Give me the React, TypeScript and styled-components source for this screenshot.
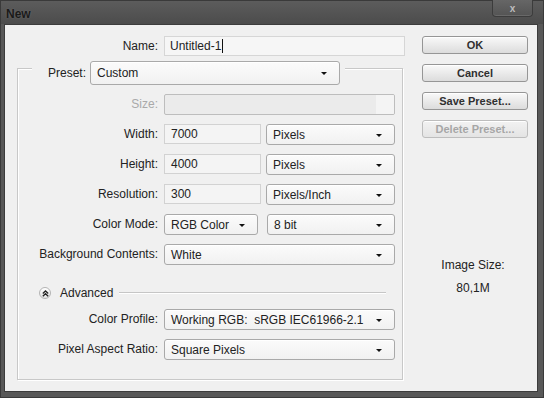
import React from "react";
import styled, { createGlobalStyle } from "styled-components";

const GlobalStyle = createGlobalStyle`
  html, body {
    margin: 0;
    padding: 0;
    background: #4e4e4e;
  }
  * {
    box-sizing: border-box;
  }
`;

const Dialog: React.FC = () => {
  return (
    <Window>
      <TitleBar>
        <Title>New</Title>
        <CloseButton>x</CloseButton>
      </TitleBar>
      <Client>
        <MainColumn>
          <NameRow>
            <Label>Name:</Label>
            <NameInput>
              Untitled-1<Caret />
            </NameInput>
          </NameRow>

          <GroupBox>
            <PresetRow>
              <Label>Preset:</Label>
              <Select width={250}>Custom</Select>
            </PresetRow>

            <Rows first>
              <FieldRow>
                <Label disabled>Size:</Label>
                <SizeInput>
                  <SizeStepper />
                </SizeInput>
              </FieldRow>
              <FieldRow>
                <Label>Width:</Label>
                <Pair left={97} gap={5}>
                  <TextInput>7000</TextInput>
                  <Select>Pixels</Select>
                </Pair>
              </FieldRow>
              <FieldRow>
                <Label>Height:</Label>
                <Pair left={97} gap={5}>
                  <TextInput>4000</TextInput>
                  <Select>Pixels</Select>
                </Pair>
              </FieldRow>
              <FieldRow>
                <Label>Resolution:</Label>
                <Pair left={97} gap={5}>
                  <TextInput>300</TextInput>
                  <Select>Pixels/Inch</Select>
                </Pair>
              </FieldRow>
              <FieldRow>
                <Label>Color Mode:</Label>
                <Pair left={94} gap={9}>
                  <Select>RGB Color</Select>
                  <Select>8 bit</Select>
                </Pair>
              </FieldRow>
              <FieldRow>
                <Label>Background Contents:</Label>
                <Select>White</Select>
              </FieldRow>
            </Rows>

            <AdvancedRow>
              <AdvancedIcon>
                <svg width="7" height="7" viewBox="0 0 7 7">
                  <path
                    d="M0.8 3.4 L3.5 0.9 L6.2 3.4 M0.8 6.2 L3.5 3.7 L6.2 6.2"
                    fill="none"
                    stroke="#222"
                    strokeWidth="1.3"
                  />
                </svg>
              </AdvancedIcon>
              <AdvancedText>Advanced</AdvancedText>
              <Rule />
            </AdvancedRow>

            <Rows>
              <FieldRow>
                <Label>Color Profile:</Label>
                <Select>Working RGB:&nbsp; sRGB IEC61966-2.1</Select>
              </FieldRow>
              <FieldRow>
                <Label>Pixel Aspect Ratio:</Label>
                <Select>Square Pixels</Select>
              </FieldRow>
            </Rows>
          </GroupBox>
        </MainColumn>

        <SideColumn>
          <Button>OK</Button>
          <Button>Cancel</Button>
          <Button>Save Preset...</Button>
          <Button disabled>Delete Preset...</Button>
          <ImageSize>
            <span>Image Size:</span>
            <span>80,1M</span>
          </ImageSize>
        </SideColumn>
      </Client>
    </Window>
  );
};

export default function App() {
  return (
    <>
      <GlobalStyle />
      <Dialog />
    </>
  );
}

const Window = styled.div`
  width: 544px;
  height: 398px;
  display: flex;
  flex-direction: column;
  background: #585858;
  border: 1px solid #3a3a3a;
  font-family: "Liberation Sans", Arial, sans-serif;
  font-size: 12px;
  color: #222;
`;

const TitleBar = styled.div`
  height: 25px;
  display: flex;
  align-items: flex-start;
  justify-content: space-between;
  background: linear-gradient(#5c5c5c, #4c4c4c);
`;

const Title = styled.div`
  margin: 6px 0 0 5px;
  font-weight: bold;
  font-size: 12px;
  color: #1a1a1a;
  text-shadow: 0 0 2px rgba(255, 255, 255, 0.15);
`;

const CloseButton = styled.div`
  width: 41px;
  height: 17px;
  margin-right: 10px;
  margin-top: -1px;
  display: flex;
  align-items: center;
  justify-content: center;
  font-size: 10px;
  font-weight: bold;
  color: #bdbdbd;
  background: linear-gradient(#666, #545454);
  border: 1px solid #3c3c3c;
  border-top: none;
  border-radius: 0 0 4px 4px;
  box-shadow: inset 0 -1px 0 rgba(255, 255, 255, 0.12);
`;

const Client = styled.div`
  flex: 1;
  margin: 0 5px 5px 3px;
  display: flex;
  gap: 17px;
  padding: 11px 9px 11px 12px;
  background: #f0f0f0;
  border: 1px solid #3c3c3c;
`;

const MainColumn = styled.div`
  width: 388px;
  display: flex;
  flex-direction: column;
`;

const Label = styled.div<{ disabled?: boolean }>`
  text-align: right;
  white-space: nowrap;
  line-height: 21px;
  color: ${(p) => (p.disabled ? "#a9a9a9" : "#222")};
`;

const NameRow = styled.div`
  display: grid;
  grid-template-columns: 141px 241px;
  column-gap: 6px;
  height: 20px;
  ${Label} {
    line-height: 20px;
  }
`;

const TextInput = styled.div`
  height: 20px;
  padding: 0 6px;
  display: flex;
  align-items: center;
  background: #f4f4f4;
  border: 1px solid #d2d2d2;
  white-space: nowrap;
`;

const NameInput = styled(TextInput)`
  padding-left: 5px;
  background: #f6f6f6;
  border-color: #d6d6d6;
`;

const Caret = styled.span`
  display: inline-block;
  width: 1px;
  height: 14px;
  margin-left: 1px;
  background: #111;
`;

const GroupBox = styled.div`
  margin-top: 12px;
  width: 386px;
  height: 312px;
  display: flex;
  flex-direction: column;
  border: 1px solid #c8c8c8;
  box-shadow: inset 1px 1px 0 #ffffff, 1px 1px 0 #ffffff;
  padding: 0 7px 0 0;
`;

const PresetRow = styled.div`
  margin: -8px 0 0 14px;
  align-self: flex-start;
  display: flex;
  gap: 4px;
  padding: 0 5px 0 16px;
  background: #f0f0f0;
  ${Label} {
    line-height: 24px;
  }
`;

const Select = styled.div<{ width?: number }>`
  position: relative;
  height: 21px;
  ${(p) => (p.width ? `width: ${p.width}px; height: 24px;` : "")}
  padding: 0 20px 0 6px;
  display: flex;
  align-items: center;
  white-space: nowrap;
  overflow: hidden;
  background: linear-gradient(#fbfbfb, #f1f1f1);
  border: 1px solid #a9a9a9;
  border-radius: 3px;
  box-shadow: inset 0 1px 0 #ffffff;

  &::after {
    content: "";
    position: absolute;
    right: 12px;
    top: 50%;
    margin-top: -1px;
    border-left: 3px solid transparent;
    border-right: 3px solid transparent;
    border-top: 3px solid #111;
  }
`;

const Rows = styled.div<{ first?: boolean }>`
  display: flex;
  flex-direction: column;
  gap: 9px;
  margin-top: ${(p) => (p.first ? 9 : 9)}px;
`;

const FieldRow = styled.div`
  display: grid;
  grid-template-columns: 140px 231px;
  column-gap: 6px;
  height: 21px;
`;

const Pair = styled.div<{ left: number; gap: number }>`
  display: grid;
  grid-template-columns: ${(p) => p.left}px 1fr;
  column-gap: ${(p) => p.gap}px;
`;

const SizeInput = styled.div`
  height: 21px;
  display: flex;
  justify-content: flex-end;
  background: #ebebeb;
  border: 1px solid #bdbdbd;
  border-radius: 2px;
  overflow: hidden;
`;

const SizeStepper = styled.div`
  width: 18px;
  background: #f4f4f4;
`;

const AdvancedRow = styled.div`
  margin-top: 21px;
  display: flex;
  align-items: center;
  height: 14px;
  padding: 0 9px 0 21px;
`;

const AdvancedIcon = styled.div`
  width: 12px;
  height: 12px;
  border-radius: 50%;
  border: 1px solid #b4b4b4;
  background: linear-gradient(#ffffff, #e2e2e2);
  display: flex;
  align-items: center;
  justify-content: center;
`;

const AdvancedText = styled.div`
  margin-left: 9px;
  margin-right: 6px;
  white-space: nowrap;
`;

const Rule = styled.div`
  flex: 1;
  height: 2px;
  border-top: 1px solid #c6c6c6;
  border-bottom: 1px solid #ffffff;
`;

const SideColumn = styled.div`
  width: 107px;
  display: flex;
  flex-direction: column;
  gap: 10px;
`;

const Button = styled.div<{ disabled?: boolean }>`
  height: 18px;
  display: flex;
  align-items: center;
  justify-content: center;
  font-size: 11px;
  font-weight: bold;
  color: ${(p) => (p.disabled ? "#a6a6a6" : "#303030")};
  background: ${(p) =>
    p.disabled
      ? "linear-gradient(#f2f2f2, #e4e4e4)"
      : "linear-gradient(#f9f9f9, #dcdcdc)"};
  border: 1px solid ${(p) => (p.disabled ? "#bdbdbd" : "#969696")};
  border-radius: 3px;
  box-shadow: inset 0 1px 0 #ffffff;
`;

const ImageSize = styled.div`
  margin-top: 110px;
  display: flex;
  flex-direction: column;
  align-items: center;
  gap: 9px;
  padding-right: 4px;
  line-height: 14px;
`;
